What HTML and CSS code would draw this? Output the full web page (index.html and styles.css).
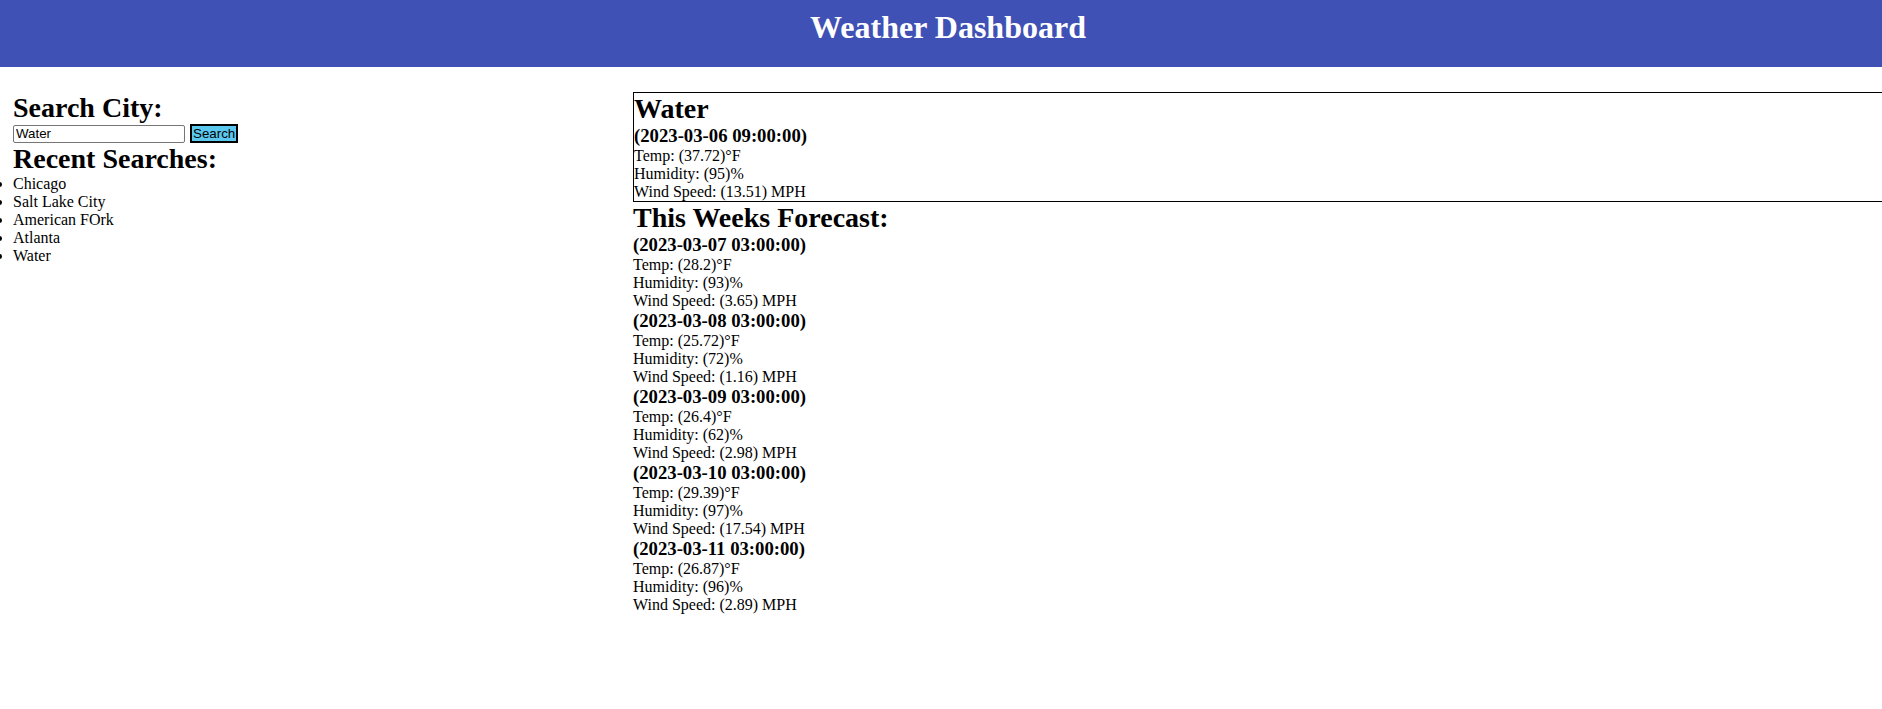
FILE: index.html
```html
<!DOCTYPE html>
<html lang="en">
<head>
<meta charset="utf-8">
<title>Weather Dashboard</title>
<link rel="stylesheet" href="styles.css">
</head>
<body>
<header class="top-bar">
  <h1 class="title">Weather Dashboard</h1>
</header>
<main class="layout">
  <section class="sidebar">
    <h2 class="heading">Search City:</h2>
    <form class="search-form">
      <input class="search-input" type="text" value="Water">
      <button class="search-btn" type="button">Search</button>
    </form>
    <h2 class="heading">Recent Searches:</h2>
    <ul class="recent-list">
      <li>Chicago</li>
      <li>Salt Lake City</li>
      <li>American FOrk</li>
      <li>Atlanta</li>
      <li>Water</li>
    </ul>
  </section>
  <section class="content">
    <div class="current">
      <h2 class="heading">Water</h2>
      <h3 class="date">(2023-03-06 09:00:00)</h3>
      <p class="stat">Temp: (37.72)°F</p>
      <p class="stat">Humidity: (95)%</p>
      <p class="stat">Wind Speed: (13.51) MPH</p>
    </div>
    <h2 class="heading">This Weeks Forecast:</h2>
    <div class="forecast">
      <div class="day">
        <h3 class="date">(2023-03-07 03:00:00)</h3>
        <p class="stat">Temp: (28.2)°F</p>
        <p class="stat">Humidity: (93)%</p>
        <p class="stat">Wind Speed: (3.65) MPH</p>
      </div>
      <div class="day">
        <h3 class="date">(2023-03-08 03:00:00)</h3>
        <p class="stat">Temp: (25.72)°F</p>
        <p class="stat">Humidity: (72)%</p>
        <p class="stat">Wind Speed: (1.16) MPH</p>
      </div>
      <div class="day">
        <h3 class="date">(2023-03-09 03:00:00)</h3>
        <p class="stat">Temp: (26.4)°F</p>
        <p class="stat">Humidity: (62)%</p>
        <p class="stat">Wind Speed: (2.98) MPH</p>
      </div>
      <div class="day">
        <h3 class="date">(2023-03-10 03:00:00)</h3>
        <p class="stat">Temp: (29.39)°F</p>
        <p class="stat">Humidity: (97)%</p>
        <p class="stat">Wind Speed: (17.54) MPH</p>
      </div>
      <div class="day">
        <h3 class="date">(2023-03-11 03:00:00)</h3>
        <p class="stat">Temp: (26.87)°F</p>
        <p class="stat">Humidity: (96)%</p>
        <p class="stat">Wind Speed: (2.89) MPH</p>
      </div>
    </div>
  </section>
</main>
</body>
</html>
```

FILE: styles.css
```css
html, body {
  overflow-x: hidden;
}

body {
  margin: 0;
  font-family: "Liberation Serif", "Times New Roman", serif;
  font-size: 16px;
  color: #000;
  background: #fff;
}

.top-bar {
  height: 67px;
  box-sizing: border-box;
  padding: 9px 0 0 14px;
  background: #3f51b5;
  text-align: center;
}

.title {
  margin: 0;
  font-size: 32px;
  font-weight: bold;
  color: #fff;
}

.layout {
  display: flex;
  margin-top: 25px;
}

.sidebar {
  flex: 0 0 633px;
  box-sizing: border-box;
  padding-left: 13px;
}

.heading {
  margin: 0;
  font-size: 28px;
  font-weight: bold;
}

.search-form {
  display: flex;
  align-items: center;
  gap: 4px;
  margin: 0;
}

.search-input {
  width: 172px;
  height: 18px;
  box-sizing: border-box;
  margin: 0;
  padding: 1px 2px;
  border: 1px solid #767676;
  border-radius: 2px;
  font-family: "Liberation Sans", Arial, sans-serif;
  font-size: 13.33px;
  color: #000;
}

.search-btn {
  height: 19px;
  box-sizing: border-box;
  margin: 0 0 0 1px;
  padding: 0 1px;
  border: 2px solid #000;
  background: #5bc8ef;
  font-family: "Liberation Sans", Arial, sans-serif;
  font-size: 13.33px;
  line-height: 1;
  color: #000;
}

.recent-list {
  margin: 0;
  padding: 0;
  list-style: disc outside;
}

.content {
  flex: 1 1 auto;
  min-width: 0;
}

.current {
  width: calc(100% + 40px);
  border: 1px solid #000;
}

.date {
  margin: 0;
  font-size: 18.72px;
  font-weight: bold;
}

.stat {
  margin: 0;
}
```
